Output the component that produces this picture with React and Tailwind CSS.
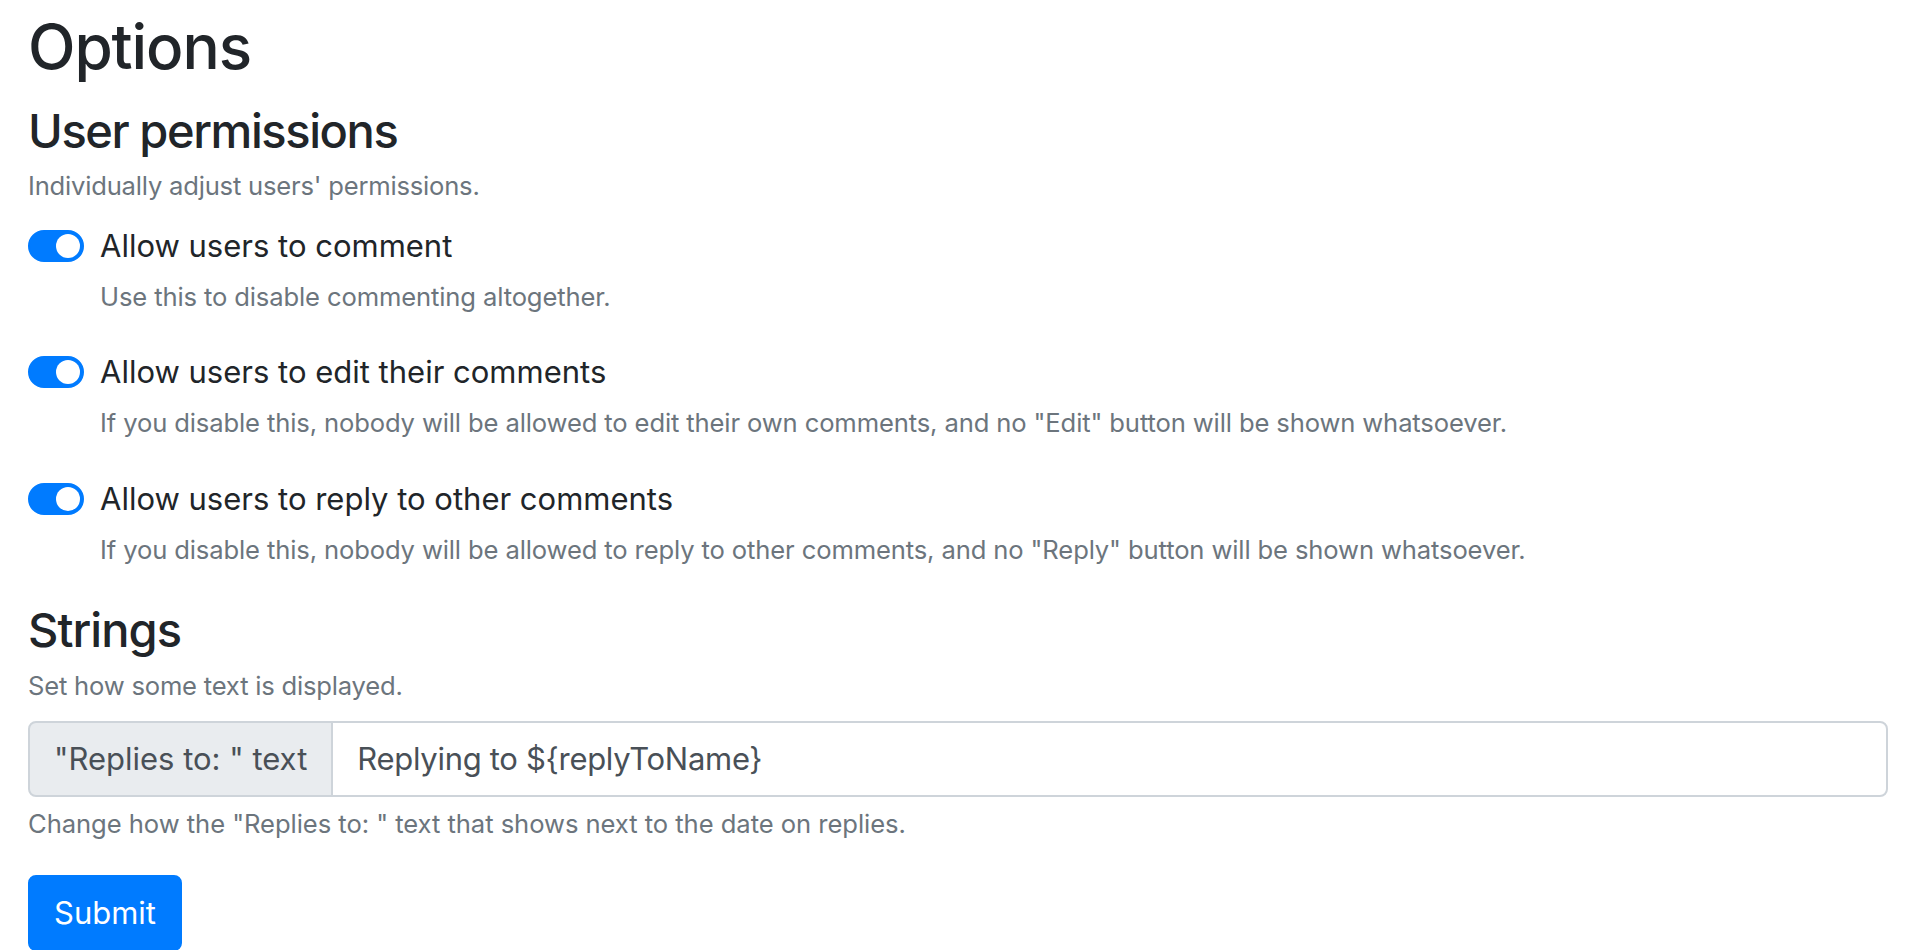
import React from "react";

function Toggle() {
  return (
    <div className="mt-[8px] flex h-[32px] w-[56px] shrink-0 items-center justify-end rounded-full border-2 border-[#007bff] bg-[#007bff] pr-[2px]">
      <div className="h-[24px] w-[24px] rounded-full bg-white" />
    </div>
  );
}

function SwitchRow({ label, help }) {
  return (
    <div className="mb-[32px]">
      <div className="flex items-start gap-[16px]">
        <Toggle />
        <span className="text-[31px] leading-[48px] text-[#212529]">{label}</span>
      </div>
      <div className="mt-[8px] pl-[72px] text-[25.6px] leading-[38.4px] tracking-[-0.005em] text-[#6c757d]">
        {help}
      </div>
    </div>
  );
}

export default function App() {
  return (
    <div
      className="min-h-[950px] bg-white pl-[28px] pr-[30px] pt-[9px]"
      style={{ fontFamily: "Inter, 'Noto Sans', sans-serif" }}
    >
      <h2 className="mb-[16px] text-[62px] font-medium leading-[76.8px] tracking-[-0.018em] text-[#212529]">
        Options
      </h2>
      <h4 className="text-[47px] font-medium leading-[57.6px] tracking-[-0.03em] text-[#212529]">
        User permissions
      </h4>
      <div className="mb-[16px] mt-[8px] text-[25.6px] leading-[38.4px] tracking-[-0.008em] text-[#6c757d]">
        Individually adjust users' permissions.
      </div>

      <SwitchRow label="Allow users to comment" help="Use this to disable commenting altogether." />
      <SwitchRow
        label="Allow users to edit their comments"
        help={'If you disable this, nobody will be allowed to edit their own comments, and no "Edit" button will be shown whatsoever.'}
      />
      <SwitchRow
        label="Allow users to reply to other comments"
        help={'If you disable this, nobody will be allowed to reply to other comments, and no "Reply" button will be shown whatsoever.'}
      />

      <h4 className="text-[47px] font-medium leading-[57.6px] tracking-[-0.02em] text-[#212529]">
        Strings
      </h4>
      <div className="mb-[16px] mt-[8px] text-[25.6px] leading-[38.4px] tracking-[-0.008em] text-[#6c757d]">
        Set how some text is displayed.
      </div>

      <div className="flex h-[76px] w-full">
        <div className="flex items-center rounded-l-[8px] border-2 border-[#ced4da] bg-[#e9ecef] px-[24px] text-[31px] leading-[48px] text-[#495057]">
          "Replies to: " text
        </div>
        <div className="-ml-[2px] flex flex-1 items-center rounded-r-[8px] border-2 border-[#ced4da] bg-white px-[24px] text-[31px] leading-[48px] tracking-[-0.3px] text-[#495057]">
          {"Replying to ${replyToName}"}
        </div>
      </div>
      <div className="mb-[32px] mt-[8px] text-[25.6px] leading-[38.4px] tracking-[-0.002em] text-[#6c757d]">
        Change how the "Replies to: " text that shows next to the date on replies.
      </div>

      <button className="rounded-[8px] border-2 border-[#007bff] bg-[#007bff] px-[24px] py-[12px] text-[31px] leading-[48px] text-white">
        Submit
      </button>
    </div>
  );
}
